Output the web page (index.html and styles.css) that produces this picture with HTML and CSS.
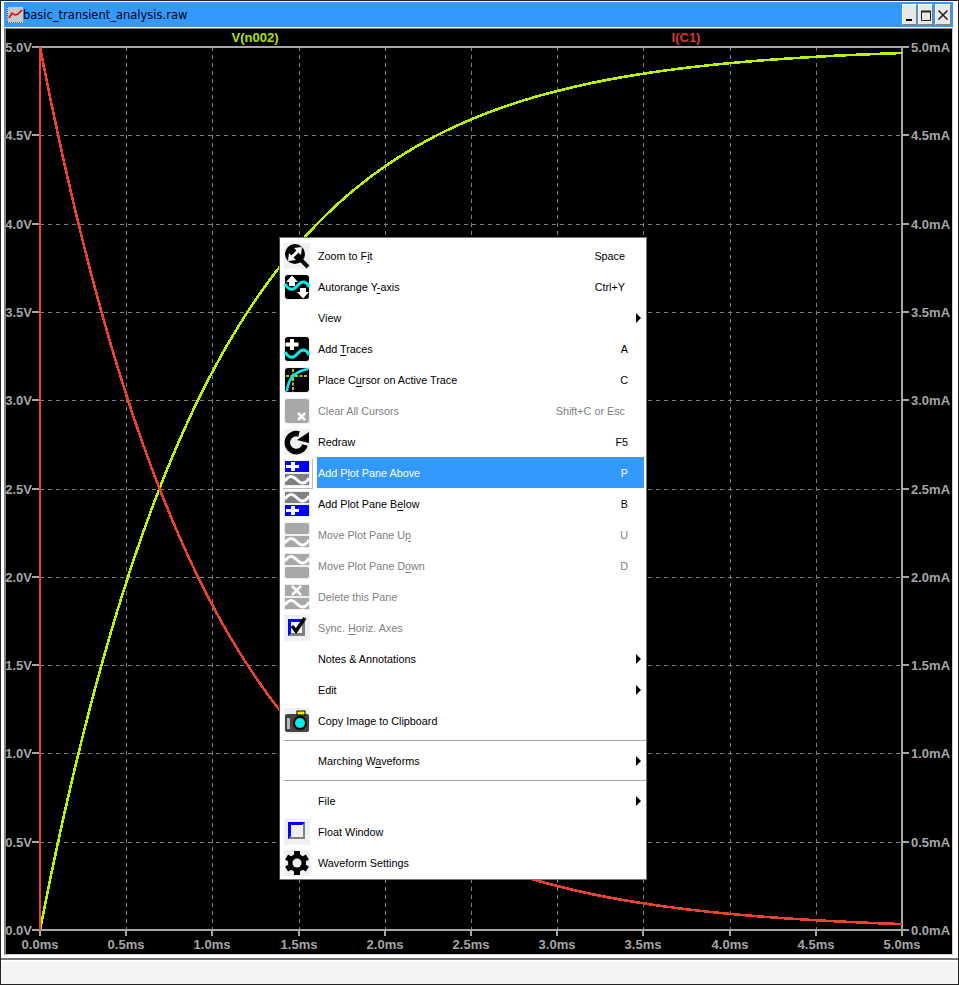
FILE: index.html
```html
<!DOCTYPE html>
<html lang="en">
  <head>
    <meta charset="utf-8" />
    <title>basic_transient_analysis.raw</title>
    <link rel="stylesheet" href="styles.css">
  </head>
  <body>
    <!-- shared menu icons -->
    <svg class="defs" width="0" height="0">
      <defs>
        <path id="wave" d="M0 6 C3 1 7 0 11 4 S19 11 24 3" fill="none" stroke="#fff" stroke-width="3" />
        <g id="i-zoom">
          <circle cx="11" cy="11" r="10" />
          <path d="M17 17 L24 24" stroke="#000" stroke-width="4" />
          <path d="M7 15 L15 7" stroke="#fff" stroke-width="3" />
          <path d="M4 18 L5 10 L12 17 Z M18 4 L17 12 L10 5 Z" fill="#fff" />
        </g>
        <g id="i-autorange">
          <rect x="1" y="1" width="24" height="24" rx="3" />
          <path d="M1 10 C3 14 7 17 11 14 S16 7 20 8 S24 11 25 13" fill="none" stroke="#0ee" stroke-width="3" />
          <path d="M8 1.5 L14 8 L11 8 L11 12 L5 12 L5 8 L2 8 Z M19 24.5 L13 18 L16 18 L16 14 L22 14 L22 18 L25 18 Z" fill="#fff" />
        </g>
        <g id="i-add">
          <rect x="1" y="1" width="24" height="24" rx="3" />
          <path d="M1 16 C3 20 7 23 11 20 S16 13 20 14 S24 17 25 19" fill="none" stroke="#0ee" stroke-width="3" />
          <path d="M6 3 H10 V6.5 H14.5 V10.5 H10 V14 H6 V10.5 H1.5 V6.5 H6 Z" fill="#fff" />
        </g>
        <g id="i-cursor">
          <rect x="1" y="1" width="24" height="24" rx="3" />
          <path d="M2 9 H24 M9 2 V25" stroke="#ff0" stroke-width="1.5" stroke-dasharray="3 1.5" />
          <path d="M3 24 C4 14 8 5 24 2" fill="none" stroke="#0ee" stroke-width="2.5" />
        </g>
        <g id="i-clear">
          <rect x="1" y="1" width="24" height="24" rx="3" fill="#a8a8a8" />
          <path d="M14 15 L21 22 M21 15 L14 22" stroke="#fff" stroke-width="2.5" />
        </g>
        <g id="i-redraw">
          <path d="M21 16 A9 9 0 1 1 15 5" fill="none" stroke="#000" stroke-width="5.5" />
          <path d="M25 3 L25 14 L13 11 Z" />
        </g>
        <g id="i-pane-above">
          <rect x="1" y="1" width="24" height="11" fill="#00f" />
          <path d="M7 2 H11 V5 H15 V8 H11 V11 H7 V8 H2 V5 H7 Z" fill="#fff" />
          <rect x="1" y="14" width="24" height="11" fill="#808080" />
          <use href="#wave" x="1" y="15" />
        </g>
        <g id="i-pane-below">
          <rect x="1" y="1" width="24" height="11" fill="#808080" />
          <use href="#wave" x="1" y="2" />
          <rect x="1" y="14" width="24" height="11" fill="#00f" />
          <path d="M7 15 H11 V18 H15 V21 H11 V24 H7 V21 H2 V18 H7 Z" fill="#fff" />
        </g>
        <g id="i-move-up">
          <rect x="1" y="1" width="24" height="11" rx="2" fill="#a8a8a8" />
          <rect x="1" y="14" width="24" height="11" fill="#a8a8a8" />
          <use href="#wave" x="1" y="15" />
        </g>
        <g id="i-move-down">
          <rect x="1" y="1" width="24" height="11" fill="#a8a8a8" />
          <use href="#wave" x="1" y="2" />
          <rect x="1" y="14" width="24" height="11" rx="2" fill="#a8a8a8" />
        </g>
        <g id="i-delete">
          <rect x="1" y="1" width="24" height="11" fill="#a8a8a8" />
          <path d="M8 2 L17 11 M17 2 L8 11" stroke="#fff" stroke-width="2.5" />
          <rect x="1" y="14" width="24" height="11" fill="#a8a8a8" />
          <use href="#wave" x="1" y="15" />
        </g>
        <g id="i-sync">
          <rect x="4" y="4" width="17" height="17" fill="#00f" />
          <path d="M21 4 V21 H4 Z" fill="#808080" />
          <rect x="7" y="7" width="11" height="11" fill="#f0f0f0" />
          <path d="M8 11 L12 16 L21 3" fill="none" stroke="#000" stroke-width="3.5" />
        </g>
        <g id="i-camera">
          <rect x="1" y="6" width="24" height="18" rx="2" fill="#444" />
          <rect x="13" y="3" width="8" height="4" fill="#ee0" stroke="#000" />
          <rect x="3" y="10" width="3" height="11" fill="#bbb" />
          <circle cx="16" cy="15" r="7" fill="#000" />
          <circle cx="16" cy="15" r="5" fill="#0ee" />
        </g>
        <g id="i-float">
          <rect x="4" y="3" width="17" height="17" fill="#00f" />
          <path d="M21 3 V20 H4 Z" fill="#808080" />
          <rect x="7" y="6" width="12" height="12" fill="#f0f0f0" />
        </g>
        <g id="i-gear">
          <circle cx="13" cy="13" r="9" />
          <path d="M13 1 V25 M2.6 7 L23.4 19 M23.4 7 L2.6 19" stroke="#000" stroke-width="6" />
          <circle cx="13" cy="13" r="4.5" fill="#f0f0f0" />
        </g>
      </defs>
    </svg>

    <div class="window">
      <div class="frame">
        <div class="titlebar">
          <svg class="appicon" width="16" height="16" viewBox="0 0 16 16">
            <rect width="16" height="16" fill="#c8c8c8" />
            <path d="M0 0 V16 H16" fill="none" stroke="#000" stroke-dasharray="1 1" />
            <path d="M2 11 L5 6 L8 8 L11 7 L15 3" fill="none" stroke="#e00" stroke-width="1.5" />
          </svg>
          <span class="title">basic_transient_analysis.raw</span>
          <div class="winbtns">
            <button class="winbtn">
              <svg width="12" height="12" viewBox="0 0 12 12"><path d="M2 11 H8" stroke="#000" stroke-width="2" /></svg>
            </button>
            <button class="winbtn">
              <svg width="12" height="12" viewBox="0 0 12 12"><path d="M1.5 2.5 H10.5 V11.5 H1.5 Z" fill="none" stroke="#222" /><path d="M1 2.5 H11" stroke="#222" stroke-width="2" /></svg>
            </button>
            <button class="winbtn winbtn-close">
              <svg width="12" height="12" viewBox="0 0 12 12"><path d="M1.5 1.5 L10.5 10.5 M10.5 1.5 L1.5 10.5" stroke="#222" stroke-width="1.6" /></svg>
            </button>
          </div>
        </div>

        <div class="pane">
          <svg id="plot" class="plot" width="946" height="925" viewBox="6 29 946 925"></svg>

          <!-- context menu -->
          <div class="menu">
            <div class="item"><svg class="icon" viewBox="0 0 26 26"><use href="#i-zoom" /></svg><div class="body"><span>Zoom to F<u>i</u>t</span><span class="key">Space</span></div></div>
            <div class="item"><svg class="icon" viewBox="0 0 26 26"><use href="#i-autorange" /></svg><div class="body"><span>Autorange Y<u>-</u>axis</span><span class="key">Ctrl+Y</span></div></div>
            <div class="item"><div class="icon-blank"></div><div class="body"><span>View</span><span class="arrow"></span></div></div>
            <div class="item"><svg class="icon" viewBox="0 0 26 26"><use href="#i-add" /></svg><div class="body"><span>Add <u>T</u>races</span><span class="key key-short">A</span></div></div>
            <div class="item"><svg class="icon" viewBox="0 0 26 26"><use href="#i-cursor" /></svg><div class="body"><span>Place C<u>u</u>rsor on Active Trace</span><span class="key key-short">C</span></div></div>
            <div class="item item-off"><svg class="icon" viewBox="0 0 26 26"><use href="#i-clear" /></svg><div class="body"><span>Clear All Cursors</span><span class="key">Shift+C or Esc</span></div></div>
            <div class="item"><svg class="icon" viewBox="0 0 26 26"><use href="#i-redraw" /></svg><div class="body"><span>Redraw</span><span class="key key-short">F5</span></div></div>
            <div class="item item-active"><svg class="icon" viewBox="0 0 26 26"><use href="#i-pane-above" /></svg><div class="body"><span>Add P<u>l</u>ot Pane Above</span><span class="key key-short">P</span></div></div>
            <div class="item"><svg class="icon" viewBox="0 0 26 26"><use href="#i-pane-below" /></svg><div class="body"><span>Add Plot Pane B<u>e</u>low</span><span class="key key-short">B</span></div></div>
            <div class="item item-off"><svg class="icon" viewBox="0 0 26 26"><use href="#i-move-up" /></svg><div class="body"><span>Move Plot Pane U<u>p</u></span><span class="key key-short">U</span></div></div>
            <div class="item item-off"><svg class="icon" viewBox="0 0 26 26"><use href="#i-move-down" /></svg><div class="body"><span>Move Plot Pane D<u>o</u>wn</span><span class="key key-short">D</span></div></div>
            <div class="item item-off"><svg class="icon" viewBox="0 0 26 26"><use href="#i-delete" /></svg><div class="body"><span>Delete this Pane</span></div></div>
            <div class="item item-off"><svg class="icon" viewBox="0 0 26 26"><use href="#i-sync" /></svg><div class="body"><span>Sync. <u>H</u>oriz. Axes</span></div></div>
            <div class="item"><div class="icon-blank"></div><div class="body"><span>Notes &amp; Annotations</span><span class="arrow"></span></div></div>
            <div class="item"><div class="icon-blank"></div><div class="body"><span>Edit</span><span class="arrow"></span></div></div>
            <div class="item"><svg class="icon" viewBox="0 0 26 26"><use href="#i-camera" /></svg><div class="body"><span>Copy Image to Clipboard</span></div></div>
            <div class="sep"></div>
            <div class="item"><div class="icon-blank"></div><div class="body"><span>Marching W<u>a</u>veforms</span><span class="arrow"></span></div></div>
            <div class="sep"></div>
            <div class="item"><div class="icon-blank"></div><div class="body"><span>File</span><span class="arrow"></span></div></div>
            <div class="item"><svg class="icon" viewBox="0 0 26 26"><use href="#i-float" /></svg><div class="body"><span>Float Window</span></div></div>
            <div class="item"><svg class="icon" viewBox="0 0 26 26"><use href="#i-gear" /></svg><div class="body"><span>Waveform Settings</span></div></div>
          </div>
        </div>
      </div>
      <div class="statusbar"></div>
    </div>

    <script src="plot.js"></script>
  </body>
</html>
```

FILE: styles.css
```css
body {
  margin: 0;
  background: #fff;
  font-family: "Liberation Sans", Arial, sans-serif;
}
.defs {
  position: absolute;
}
.window {
  box-sizing: border-box;
  display: flex;
  flex-direction: column;
  width: 959px;
  height: 985px;
  border: 1px solid #222;
  background: #fff;
}
.frame {
  display: flex;
  flex-direction: column;
  flex: 1;
  gap: 1px;
  padding: 1px 5px 3px 3px;
}

/* title bar */
.titlebar {
  display: flex;
  align-items: center;
  flex: none;
  height: 25px;
  padding-left: 3px;
  background: #3399ff;
}
.appicon {
  flex: none;
}
.title {
  font-family: "DejaVu Sans", sans-serif;
  font-size: 11.5px;
  color: #000;
}
.winbtns {
  display: flex;
  gap: 1px;
  margin-left: auto;
  margin-right: 2px;
}
.winbtn {
  display: flex;
  align-items: center;
  justify-content: center;
  box-sizing: border-box;
  width: 15px;
  height: 21px;
  padding: 0;
  border: 1px solid;
  border-color: #fff #808080 #808080 #fff;
  background: #e8e8e8;
}
.winbtn-close {
  width: 16px;
  margin-left: 1px;
}

/* plot */
.pane {
  position: relative;
  flex: none;
  height: 925px;
  border-style: solid;
  border-width: 1px 1px 1px 2px;
  border-color: #808080 #d0d0d0 #d0d0d0 #808080;
  background: #000;
}
.plot {
  display: block;
}
.axis {
  fill: none;
  stroke: #a6a6a6;
  stroke-width: 2;
  shape-rendering: crispEdges;
}
.grid {
  stroke: #808080;
  stroke-width: 1;
  stroke-dasharray: 4 4;
  shape-rendering: crispEdges;
}
.trace {
  fill: none;
  stroke-width: 2.6;
  shape-rendering: crispEdges;
}
.trace-v {
  stroke: #b9f500;
}
.trace-i {
  stroke: #e8432e;
}
.tick-label {
  font-size: 13px;
  font-weight: bold;
  fill: #a6a6a6;
}
.trace-label {
  font-size: 13px;
  font-weight: bold;
}
.trace-label-v {
  fill: #b0e000;
}
.trace-label-i {
  fill: #d83a2c;
}

/* context menu */
.menu {
  position: absolute;
  left: 273px;
  top: 208px;
  box-sizing: border-box;
  width: 368px;
  height: 643px;
  padding-top: 2px;
  border: 1px solid #777;
  border-left-color: #444;
  background: #fff;
  font-size: 10.8px;
  color: #000;
}
.item {
  display: flex;
  align-items: center;
  height: 31px;
  padding: 0 2px 0 4px;
}
.icon,
.icon-blank {
  flex: none;
  width: 26px;
  height: 26px;
  margin-right: 7px;
}
.icon {
  background: #f0f0f0;
}
.body {
  display: flex;
  align-items: center;
  justify-content: space-between;
  flex: 1;
  align-self: stretch;
  padding-left: 1px;
  white-space: pre;
}
.body u {
  text-underline-offset: 2px;
}
.key {
  margin-right: 19px;
}
.key-short {
  margin-right: 16px;
}
.arrow {
  width: 0;
  height: 0;
  margin-right: 3px;
  border-style: solid;
  border-width: 5px 0 5px 5px;
  border-color: transparent transparent transparent #000;
}
.item-off {
  color: #808080;
}
.item-active .icon {
  box-shadow: 0 0 0 2px #fff, 1px 1px 0 2px #bbb;
}
.item-active .body {
  background: #3399ff;
  color: #fff;
}
.sep {
  height: 9px;
  margin-left: 3px;
  background: linear-gradient(#aaa, #aaa) center / 100% 1px no-repeat;
}

/* status bar */
.statusbar {
  flex: none;
  height: 24px;
  border-top: 2px solid #777;
  background: #f4f4f4;
  box-shadow: inset 0 2px 0 #fff;
}
```

FILE: plot.js
```js
// plot area, same numbers as the axes of the raw file: 0-5ms, 0-5V, 0-5mA
var LEFT = 40, RIGHT = 902, TOP = 47, BOTTOM = 930;
var plot = document.getElementById('plot');
var html = '';

function xAt(ms) {
  return LEFT + (RIGHT - LEFT) * ms / 5;
}
function yAt(v) {
  return BOTTOM - (BOTTOM - TOP) * v / 5;
}
function line(cls, x1, y1, x2, y2) {
  return '<line class="' + cls + '" x1="' + x1 + '" y1="' + y1 + '" x2="' + x2 + '" y2="' + y2 + '" />';
}
function label(cls, x, y, anchor, text) {
  return '<text class="' + cls + '" x="' + x + '" y="' + y + '" text-anchor="' + anchor + '">' + text + '</text>';
}

for (var i = 0; i <= 10; i++) {
  var val = (i / 2).toFixed(1);
  var x = Math.round(xAt(i / 2));
  var y = Math.round(yAt(i / 2));

  if (i > 0 && i < 10) {
    html += line('grid', x + 0.5, TOP, x + 0.5, BOTTOM);
    html += line('grid', LEFT, y + 0.5, RIGHT, y + 0.5);
  }
  html += line('axis', 32, y, LEFT, y) + line('axis', RIGHT, y, 909, y);
  html += line('axis', x, BOTTOM, x, 936);
  html += label('tick-label', 32, y + 5, 'end', val + 'V');
  html += label('tick-label', 911, y + 5, 'start', val + 'mA');
  html += label('tick-label', x, 949, 'middle', val + 'ms');
}
html += '<rect class="axis" x="' + LEFT + '" y="' + TOP + '" width="' + (RIGHT - LEFT) + '" height="' + (BOTTOM - TOP) + '" />';

// rc charge: tau = 1ms
var vPts = [], iPts = [LEFT + ',' + BOTTOM];
for (var px = 0; px <= RIGHT - LEFT; px += 2) {
  var t = 5 * px / (RIGHT - LEFT);
  var decay = Math.exp(-t);
  vPts.push((LEFT + px) + ',' + yAt(5 * (1 - decay)).toFixed(1));
  iPts.push((LEFT + px) + ',' + yAt(5 * decay).toFixed(1));
}
html += '<polyline class="trace trace-v" points="' + vPts.join(' ') + '" />';
html += '<polyline class="trace trace-i" points="' + iPts.join(' ') + '" />';

html += label('trace-label trace-label-v', 255, 42, 'middle', 'V(n002)');
html += label('trace-label trace-label-i', 686, 42, 'middle', 'I(C1)');

plot.innerHTML = html;
```
